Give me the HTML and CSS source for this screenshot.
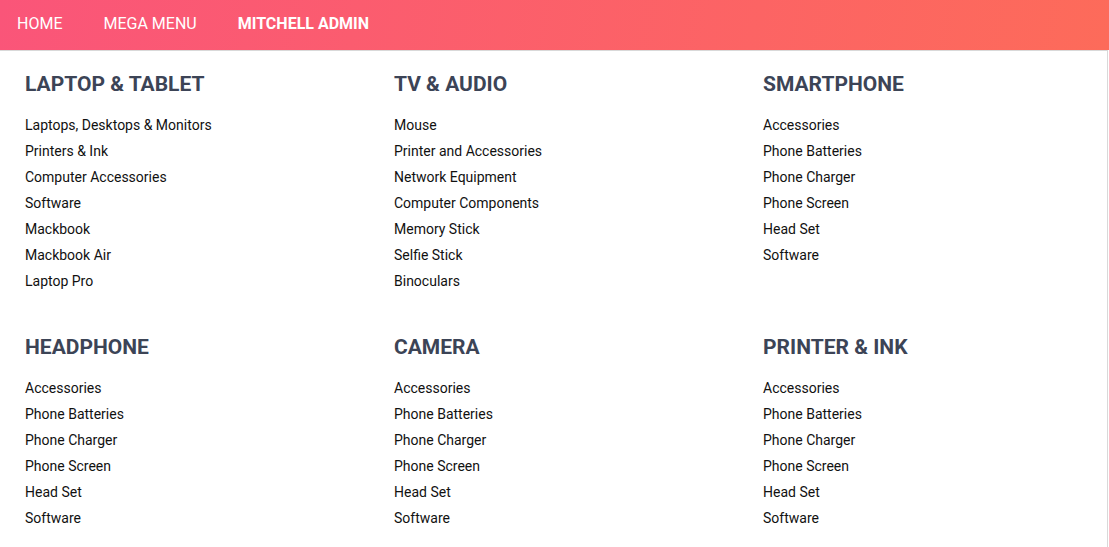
FILE: index.html
```html
<!DOCTYPE html>
<html>
<head>
<meta charset="utf-8">
<link rel="stylesheet" href="styles.css">
</head>
<body>
<nav class="navbar">
  <a class="nav-link" href="#">HOME</a>
  <a class="nav-link" href="#">MEGA MENU</a>
  <a class="nav-link nav-user" href="#">MITCHELL ADMIN</a>
</nav>
<div class="mega">
  <section class="col">
    <h3>LAPTOP &amp; TABLET</h3>
    <ul>
      <li>Laptops, Desktops &amp; Monitors</li>
      <li>Printers &amp; Ink</li>
      <li>Computer Accessories</li>
      <li>Software</li>
      <li>Mackbook</li>
      <li>Mackbook Air</li>
      <li>Laptop Pro</li>
    </ul>
  </section>
  <section class="col">
    <h3>TV &amp; AUDIO</h3>
    <ul>
      <li>Mouse</li>
      <li>Printer and Accessories</li>
      <li>Network Equipment</li>
      <li>Computer Components</li>
      <li>Memory Stick</li>
      <li>Selfie Stick</li>
      <li>Binoculars</li>
    </ul>
  </section>
  <section class="col">
    <h3>SMARTPHONE</h3>
    <ul>
      <li>Accessories</li>
      <li>Phone Batteries</li>
      <li>Phone Charger</li>
      <li>Phone Screen</li>
      <li>Head Set</li>
      <li>Software</li>
    </ul>
  </section>
  <section class="col">
    <h3>HEADPHONE</h3>
    <ul>
      <li>Accessories</li>
      <li>Phone Batteries</li>
      <li>Phone Charger</li>
      <li>Phone Screen</li>
      <li>Head Set</li>
      <li>Software</li>
    </ul>
  </section>
  <section class="col">
    <h3>CAMERA</h3>
    <ul>
      <li>Accessories</li>
      <li>Phone Batteries</li>
      <li>Phone Charger</li>
      <li>Phone Screen</li>
      <li>Head Set</li>
      <li>Software</li>
    </ul>
  </section>
  <section class="col">
    <h3>PRINTER &amp; INK</h3>
    <ul>
      <li>Accessories</li>
      <li>Phone Batteries</li>
      <li>Phone Charger</li>
      <li>Phone Screen</li>
      <li>Head Set</li>
      <li>Software</li>
    </ul>
  </section>
</div>
</body>
</html>
```
FILE: styles.css
```css
html, body {
  margin: 0;
  padding: 0;
  background: #ffffff;
  font-family: Roboto, "Liberation Sans", sans-serif;
  overflow: hidden;
}
.navbar {
  height: 50px;
  display: flex;
  align-items: center;
  padding-left: 17px;
  gap: 41px;
  background: linear-gradient(100deg, #fa5579 0%, #fd6b5a 100%);
  box-sizing: border-box;
}
.nav-link {
  color: #ffffff;
  text-decoration: none;
  font-size: 16px;
  line-height: 20px;
  margin-top: -2px;
}
.nav-user {
  font-weight: 700;
}
.mega {
  width: 1108px;
  box-sizing: border-box;
  border-top: 1px solid #d9d9d9;
  border-right: 1px solid #d9d9d9;
  display: grid;
  grid-template-columns: repeat(3, 369px);
  row-gap: 41px;
  padding: 21px 0 40px 25px;
  min-height: 520px;
  align-content: start;
}
.col h3 {
  margin: 0 0 16px 0;
  font-size: 21px;
  line-height: 24px;
  font-weight: 700;
  color: #3c4456;
}
.col ul {
  list-style: none;
  margin: 0;
  padding: 0;
}
.col li {
  font-size: 14px;
  line-height: 26px;
  color: #111111;
}
```
